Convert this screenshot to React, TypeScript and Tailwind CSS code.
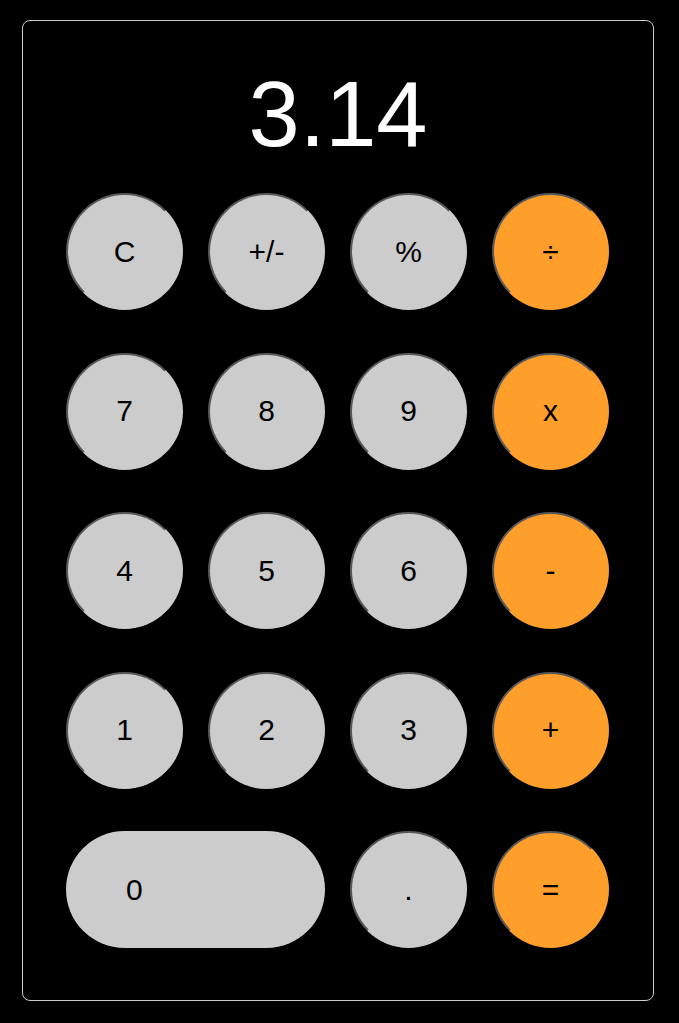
import { useState } from 'react';

type Key = {
  label: string;
  kind: 'num' | 'fn' | 'op' | 'zero';
};

const KEYS: Key[] = [
  { label: 'C', kind: 'fn' },
  { label: '+/-', kind: 'fn' },
  { label: '%', kind: 'fn' },
  { label: '÷', kind: 'op' },
  { label: '7', kind: 'num' },
  { label: '8', kind: 'num' },
  { label: '9', kind: 'num' },
  { label: 'x', kind: 'op' },
  { label: '4', kind: 'num' },
  { label: '5', kind: 'num' },
  { label: '6', kind: 'num' },
  { label: '-', kind: 'op' },
  { label: '1', kind: 'num' },
  { label: '2', kind: 'num' },
  { label: '3', kind: 'num' },
  { label: '+', kind: 'op' },
  { label: '0', kind: 'zero' },
  { label: '.', kind: 'num' },
  { label: '=', kind: 'op' },
];

export default function App() {
  const [display, setDisplay] = useState('3.14');

  const press = (label: string) => {
    if (label === 'C') setDisplay('0');
  };

  const keyClass = (k: Key) => {
    // zero is a pill, the rest are circles with a dark edge top-left
    if (k.kind === 'zero') {
      return 'col-span-2 h-[117px] rounded-full bg-[#cccccc] text-left pl-[60px]';
    }
    const color = k.kind === 'op' ? 'bg-[#fe9e2b]' : 'bg-[#cccccc]';
    return `w-[117px] h-[117px] rounded-full border-2 border-t-[#585858] border-l-[#585858] border-r-transparent border-b-transparent ${color}`;
  };

  return (
    <div className="min-h-[1023px] bg-black pt-[20px] pl-[22px] font-['Liberation_Sans',Arial,sans-serif]">
      <div className="w-[632px] h-[981px] border border-[#cccccc] rounded-lg pt-[46px]">
        {/* Display */}
        <div className="h-[94px] text-center text-white text-[92px] leading-[94px]">{display}</div>

        {/* Keypad */}
        <div className="mt-[32px] ml-[43px] grid grid-cols-[repeat(4,117px)] gap-x-[25px] gap-y-[42.5px]">
          {KEYS.map((k) => (
            <button
              key={k.label}
              onClick={() => press(k.label)}
              className={`${keyClass(k)} text-[30px] leading-none text-black`}
            >
              {k.label}
            </button>
          ))}
        </div>
      </div>
    </div>
  );
}
